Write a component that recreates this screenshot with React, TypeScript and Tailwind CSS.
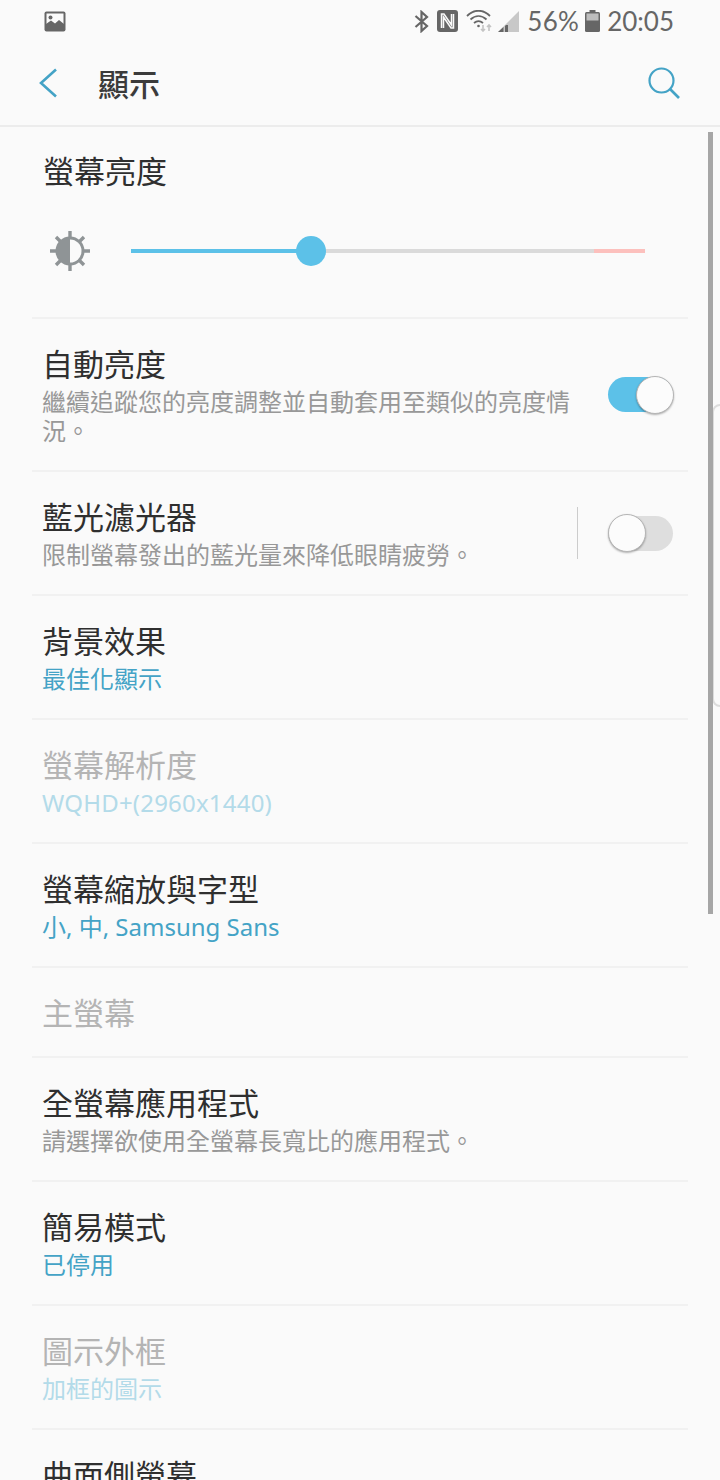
import { ReactNode } from "react";

const font = { fontFamily: '"Noto Sans CJK TC", sans-serif' };
const subFont = { fontFamily: '"Noto Sans", "Noto Sans CJK TC", sans-serif' };

type RowProps = {
  title: string
  sub?: ReactNode
  subColor?: string
  titleColor?: string
  height: string
  right?: ReactNode
}

function Row({ title, sub, subColor = "text-[#989898]", titleColor = "text-[#2f2f2f]", height, right }: RowProps) {
  return (
    <div className={`mx-8 flex items-start border-b-2 border-[#f1f1f1] ${height}`}>
      <div className="flex-1 pl-[10px] pt-[22px]">
        <div className={`text-[31px] leading-[44px] ${titleColor}`}>{title}</div>
        {sub && <div className={`mt-[2px] text-[24px] leading-[29px] ${subColor}`} style={subFont}>{sub}</div>}
      </div>
      {right}
    </div>
  );
}

function Toggle({ on }: { on: boolean }) {
  return (
    <div className={`relative h-[35px] w-[65px] rounded-full ${on ? "bg-[#5cc1e8]" : "bg-[#dedede]"}`}>
      <div className={`absolute top-[-1.5px] h-[38px] w-[38px] rounded-full border border-[#b5b5b5] bg-[#fcfcfc] shadow-[0_1px_2px_rgba(0,0,0,0.3)] ${on ? "right-[-1px]" : "left-0"}`} />
    </div>
  );
}

function StatusBar() {
  return (
    <div className="flex h-[42px] items-center pl-[44px] pr-[46px] text-[#666666]">
      <svg width="22" height="21" viewBox="0 0 22 21">
        <rect x="0.5" y="0.5" width="21" height="20" rx="2" fill="#666666" />
        <rect x="2.5" y="2.5" width="17" height="15" fill="#fafafa" />
        <circle cx="6.5" cy="6.5" r="2" fill="#666666" />
        <path d="M2 18 L2 13 L7 9.5 L11 12.5 L15 9 L20 13 L20 18 Z" fill="#666666" />
      </svg>
      <div className="flex-1" />
      <svg width="15" height="23" viewBox="0 0 15 23" fill="none" stroke="#666666" strokeWidth="2.2">
        <path d="M1.5 6 L13 16 L7.5 21 L7.5 2 L13 7 L1.5 17" />
      </svg>
      <svg className="ml-[8px]" width="21" height="22" viewBox="0 0 21 22">
        <rect width="21" height="22" rx="3" fill="#666666" />
        <path d="M4.5 18 V4 H7 L14.5 15 V4 M16.5 4 V18 H14 L6.5 7 V18" fill="none" stroke="#fafafa" strokeWidth="1.5" />
      </svg>
      <svg className="ml-[8px]" width="27" height="22" viewBox="0 0 27 22" fill="none" stroke="#666666" strokeWidth="1.8">
        <path d="M1 6 C8 -1 17 -1 24 6" />
        <path d="M4.5 9.5 C9.5 5 15.5 5 20.5 9.5" />
        <path d="M8 13 C11 10.5 14 10.5 17 13" />
        <circle cx="12.5" cy="16" r="1.3" fill="#666666" stroke="none" />
        <path d="M17 15 V21 M15 19 L17 21 L19 19" stroke="#c4c4c4" strokeWidth="1.6" />
        <path d="M23 21 V15 M21 17 L23 15 L25 17" stroke="#c4c4c4" strokeWidth="1.6" />
      </svg>
      <svg className="ml-[5px]" width="21" height="21" viewBox="0 0 21 21">
        <path d="M21 0 V21 H0 Z" fill="#c8c8c8" />
        <path d="M5.5 16 V21 H0 Z M8 14 H10 V21 H7 V15 Z" fill="#666666" />
      </svg>
      <span className="ml-[8px] text-[26px] leading-none tracking-[0.3px]" style={{ fontFamily: "Lato, sans-serif" }}>56%</span>
      <svg className="ml-[6px]" width="15" height="22" viewBox="0 0 15 22">
        <rect x="4.5" y="0" width="6" height="2" fill="#666666" />
        <rect x="0" y="2" width="15" height="20" rx="1.5" fill="#666666" />
        <rect x="1.5" y="3.5" width="12" height="7" fill="#bdbdbd" />
      </svg>
      <span className="ml-[7px] text-[26px] leading-none" style={{ fontFamily: "Lato, sans-serif" }}>20:05</span>
    </div>
  );
}

function Header() {
  return (
    <div className="flex h-[85px] items-center border-b-2 border-[#ececec] pb-[2px]">
      <svg className="ml-[39px]" width="18" height="30" viewBox="0 0 18 30" fill="none" stroke="#44a3c6" strokeWidth="2.6">
        <path d="M17 1.5 L2 15 L17 28.5" />
      </svg>
      <div className="ml-[41px] flex-1 text-[31px] font-medium leading-none text-[#3b3b3b]">顯示</div>
      <svg className="mr-[40px]" width="32" height="32" viewBox="0 0 32 32" fill="none" stroke="#44a3c6" strokeWidth="2.2">
        <circle cx="13.5" cy="13.5" r="12" />
        <path d="M22 22 L31 31" strokeWidth="2.6" />
      </svg>
    </div>
  );
}

function BrightnessIcon() {
  return (
    <svg width="40" height="40" viewBox="0 0 40 40">
      <g stroke="#8f9496" strokeWidth="3.4">
        <path d="M20 0 V40 M0 20 H40 M6 6 L34 34 M34 6 L6 34" />
      </g>
      <circle cx="20" cy="20" r="14.5" fill="#8f9496" />
      <path d="M20 8.5 A11.5 11.5 0 0 1 20 31.5 Z" fill="#fafafa" />
    </svg>
  );
}

export default function App() {
  return (
    <div className="relative h-[1480px] w-[720px] overflow-hidden bg-[#fafafa]" style={font}>
      <StatusBar />
      <Header />

      <div className="mx-8 h-[192px] border-b-2 border-[#f1f1f1]">
        <div className="pl-[11px] pt-[21px] text-[31px] leading-[44px] text-[#2f2f2f]">螢幕亮度</div>
        <div className="mt-[39px] flex items-center pl-[18px]">
          <BrightnessIcon />
          <div className="relative ml-[41px] flex h-[4px] w-[514px]">
            <div className="w-[180px] bg-[#5cc1e8]" />
            <div className="flex-1 bg-[#dadada]" />
            <div className="w-[51px] bg-[#fcc0bd]" />
            <div className="absolute left-[165px] top-[-13px] h-[30px] w-[30px] rounded-full bg-[#5cc1e8]" />
          </div>
        </div>
      </div>

      <Row
        title="自動亮度"
        sub={<>繼續追蹤您的亮度調整並自動套用至類似的亮度情<br />況。</>}
        height="h-[153px]"
        right={<div className="mr-[15px] mt-[58px]"><Toggle on /></div>}
      />
      <Row
        title="藍光濾光器"
        sub="限制螢幕發出的藍光量來降低眼睛疲勞。"
        height="h-[124px]"
        right={
          <div className="mr-[15px] mt-[35px] flex items-center">
            <div className="mr-[30px] h-[52px] w-px bg-[#cccccc]" />
            <Toggle on={false} />
          </div>
        }
      />
      <Row title="背景效果" sub="最佳化顯示" subColor="text-[#44a3c6]" height="h-[124px]" />
      <Row title="螢幕解析度" sub={<span className="tracking-[0.2px]">WQHD+(2960x1440)</span>} titleColor="text-[#b4b4b4]" subColor="text-[#b3dbe9]" height="h-[124px]" />
      <Row title="螢幕縮放與字型" sub="小, 中, Samsung Sans" subColor="text-[#44a3c6]" height="h-[124px]" />
      <Row title="主螢幕" titleColor="text-[#b4b4b4]" height="h-[90px]" />
      <Row title="全螢幕應用程式" sub="請選擇欲使用全螢幕長寬比的應用程式。" height="h-[124px]" />
      <Row title="簡易模式" sub="已停用" subColor="text-[#44a3c6]" height="h-[124px]" />
      <Row title="圖示外框" sub="加框的圖示" titleColor="text-[#b4b4b4]" subColor="text-[#b3dbe9]" height="h-[124px]" />
      <Row title="曲面側螢幕" height="h-[124px]" />

      {/* edge panel handle + scrollbar */}
      <div className="absolute left-[712px] top-[404px] h-[303px] w-[20px] rounded-l-[8px] border-2 border-[#dcdcdc] bg-[#fafafa]" />
      <div className="absolute left-[708px] top-[132px] h-[782px] w-[5px] bg-[#a6a6a6]" />
    </div>
  );
}
